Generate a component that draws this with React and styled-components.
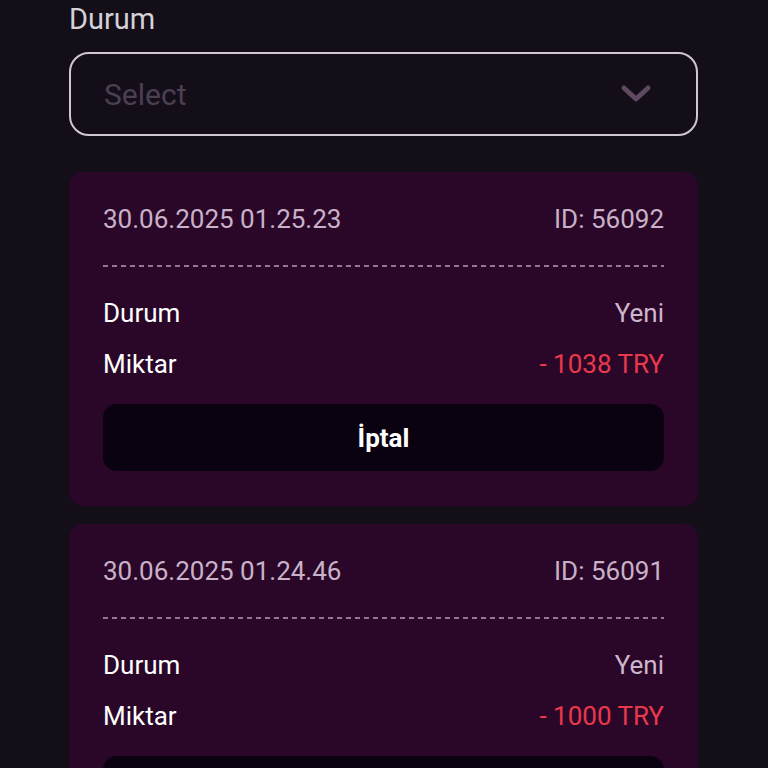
import styled, { createGlobalStyle } from "styled-components";

const Global = createGlobalStyle`
  body {
    margin: 0;
    background: #130e18;
    font-family: Roboto, "Liberation Sans", sans-serif;
  }
`;

const Page = styled.div`
  width: 629px;
  padding: 1px 0 0 69px;
  display: flex;
  flex-direction: column;
`;

const Label = styled.div`
  color: #d6d0d8;
  font-size: 29px;
  line-height: 36px;
`;

const SelectBox = styled.div`
  margin-top: 15px;
  height: 80px;
  border: 2px solid #cfc8d0;
  border-radius: 20px;
  display: flex;
  align-items: center;
  justify-content: space-between;
  padding: 0 44px 0 33px;
`;

const Placeholder = styled.span`
  color: #4d3f52;
  font-size: 30px;
`;

const List = styled.div`
  margin-top: 36px;
  display: flex;
  flex-direction: column;
  gap: 18px;
`;

const Card = styled.div`
  background: #2a0728;
  border-radius: 14px;
  padding: 31px 34px 35px;
  display: flex;
  flex-direction: column;
`;

const Head = styled.div`
  display: flex;
  justify-content: space-between;
  color: #c9b1c8;
  font-size: 26px;
  line-height: 32px;
`;

const Dashes = styled.div`
  margin: 30px 0;
  height: 2px;
  background-image: linear-gradient(to right, #957593 55%, transparent 55%);
  background-size: 9px 2px;
  background-repeat: repeat-x;
`;

const Row = styled.div`
  display: flex;
  justify-content: space-between;
  font-size: 26px;
  line-height: 32px;
  margin-bottom: 19px;
`;

const Key = styled.span`
  color: #ffffff;
`;

const Value = styled.span`
  color: ${(p) => (p.$negative ? "#e8394b" : "#cdb6cc")};
`;

const CancelButton = styled.button`
  height: 67px;
  border: none;
  border-radius: 14px;
  background: #0a0210;
  color: #ffffff;
  font-family: inherit;
  font-size: 26px;
  font-weight: 700;
  margin-top: 5px;
`;

const Chevron = () => (
  <svg width="32" height="20" viewBox="0 0 32 20">
    <path
      d="M4 4 L16 15 L28 4"
      fill="none"
      stroke="#5e4a60"
      strokeWidth="5"
      strokeLinecap="round"
      strokeLinejoin="round"
    />
  </svg>
);

const items = [
  { date: "30.06.2025 01.25.23", id: "56092", status: "Yeni", amount: "- 1038 TRY" },
  { date: "30.06.2025 01.24.46", id: "56091", status: "Yeni", amount: "- 1000 TRY" },
];

export default function App() {
  return (
    <>
      <Global />
      <Page>
        <Label>Durum</Label>
        <SelectBox>
          <Placeholder>Select</Placeholder>
          <Chevron />
        </SelectBox>
        <List>
          {items.map((it) => (
            <Card key={it.id}>
              <Head>
                <span>{it.date}</span>
                <span>ID: {it.id}</span>
              </Head>
              <Dashes />
              <Row>
                <Key>Durum</Key>
                <Value>{it.status}</Value>
              </Row>
              <Row>
                <Key>Miktar</Key>
                <Value $negative>{it.amount}</Value>
              </Row>
              <CancelButton>İptal</CancelButton>
            </Card>
          ))}
        </List>
      </Page>
    </>
  );
}
